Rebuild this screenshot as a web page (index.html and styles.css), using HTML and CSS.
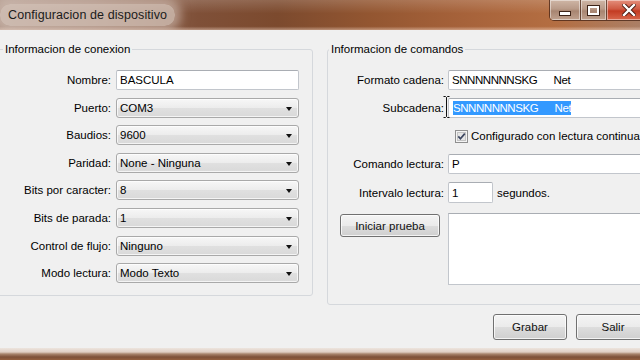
FILE: index.html
```html
<!DOCTYPE html>
<html lang="es">
<head>
<meta charset="utf-8">
<title>Configuracion de dispositivo</title>
<link rel="stylesheet" href="styles.css">
</head>
<body>
<div class="window">
  <div class="titlebar">
    <div class="title-glow"><span class="title">Configuracion de dispositivo</span></div>
    <div class="caption-btns">
      <div class="cbtn cbtn-min"><span class="glyph-min"></span></div>
      <div class="cbtn cbtn-max"><span class="glyph-max"></span></div>
      <div class="cbtn cbtn-close">
        <svg width="14" height="12" viewBox="0 0 14 12"><path d="M2 1 L12 11 M12 1 L2 11" stroke="#4a1a10" stroke-width="4.2" stroke-linecap="square"/><path d="M2 1 L12 11 M12 1 L2 11" stroke="#ffffff" stroke-width="2.4" stroke-linecap="square"/></svg>
      </div>
    </div>
  </div>

  <div class="client">
    <div class="groups">
      <fieldset class="group group-left">
        <legend>Informacion de conexion</legend>
        <div class="form form-left">
          <span class="lbl">Nombre:</span><div class="textbox">BASCULA</div>
          <span class="lbl">Puerto:</span><div class="combo"><span>COM3</span><span class="arrow"></span></div>
          <span class="lbl">Baudios:</span><div class="combo"><span>9600</span><span class="arrow"></span></div>
          <span class="lbl">Paridad:</span><div class="combo"><span>None - Ninguna</span><span class="arrow"></span></div>
          <span class="lbl">Bits por caracter:</span><div class="combo"><span>8</span><span class="arrow"></span></div>
          <span class="lbl">Bits de parada:</span><div class="combo"><span>1</span><span class="arrow"></span></div>
          <span class="lbl">Control de flujo:</span><div class="combo"><span>Ninguno</span><span class="arrow"></span></div>
          <span class="lbl">Modo lectura:</span><div class="combo"><span>Modo Texto</span><span class="arrow"></span></div>
        </div>
      </fieldset>

      <fieldset class="group group-right">
        <legend>Informacion de comandos</legend>
        <div class="form form-right">
          <span class="lbl">Formato cadena:</span><div class="textbox mono-ish">SNNNNNNNSKG      Net</div>
          <span class="lbl">Subcadena:</span><div class="textbox mono-ish"><span class="selected">SNNNNNNNSKG      Net</span></div>
          <span></span>
          <div class="check-row">
            <svg class="checkbox" width="13" height="13" viewBox="0 0 13 13">
              <rect x="0.5" y="0.5" width="12" height="12" fill="#f4f4f4" stroke="#8f8f8f"/>
              <rect x="2.5" y="2.5" width="8" height="8" fill="#e6e6e6" stroke="#c4c4c4"/>
              <path d="M3.3 6.4 L5.4 8.8 L9.8 3.6" fill="none" stroke="#3c4660" stroke-width="1.7"/>
            </svg>
            <span>Configurado con lectura continua</span>
          </div>
          <span class="lbl">Comando lectura:</span><div class="textbox">P</div>
          <span class="lbl">Intervalo lectura:</span>
          <div class="interval"><div class="textbox small">1</div><span>segundos.</span></div>
          <div class="btn-cell"><div class="button btn-test">Iniciar prueba</div></div>
          <div class="textarea"></div>
        </div>
      </fieldset>
    </div>

    <div class="actions">
      <div class="button btn-action">Grabar</div>
      <div class="button btn-action">Salir</div>
    </div>
  </div>
  <div class="frame-bottom"></div>

  <svg class="ibeam" width="7" height="22" viewBox="0 0 7 22">
    <path d="M0.5 0.5 H2.5 L3.5 1.5 L4.5 0.5 H6.5 M3.5 1.5 V20.5 M0.5 21.5 H2.5 L3.5 20.5 L4.5 21.5 H6.5" fill="none" stroke="#111" stroke-width="1"/>
  </svg>
</div>
</body>
</html>
```

FILE: styles.css
```css
html, body {
  margin: 0;
  padding: 0;
}

body {
  width: 640px;
  height: 360px;
  overflow: hidden;
  background: #7a4a30;
  font-family: "Liberation Sans", Arial, sans-serif;
  font-size: 11.5px;
  color: #000;
}

.window {
  position: relative;
  width: 660px;
  height: 360px;
  display: flex;
  flex-direction: column;
}

/* ---------- title bar ---------- */
.titlebar {
  height: 30px;
  flex: none;
  display: flex;
  justify-content: space-between;
  align-items: flex-start;
  background:
    linear-gradient(180deg, rgba(255,255,255,0.16) 0%, rgba(255,255,255,0) 45%, rgba(0,0,0,0) 88%, rgba(255,230,215,0.45) 100%),
    linear-gradient(90deg, #a98e80 0%, #9a7766 14%, #7f5038 30%, #7c4a2e 42%, #935631 56%, #a6623a 70%, #b46e42 84%, #a9836e 100%);
}

.title-glow {
  margin-top: 4px;
  height: 22px;
  padding: 0 8px 0 8px;
  display: flex;
  align-items: center;
  background: rgba(218, 203, 193, 0.72);
  box-shadow: 0 0 10px 6px rgba(218, 203, 193, 0.55);
  border-radius: 10px;
}

.title {
  font-size: 12.5px;
  color: #1b1b1b;
  letter-spacing: 0.1px;
}

.caption-btns {
  display: flex;
  margin-right: 9px;
  height: 20px;
  border: 1px solid rgba(70, 35, 20, 0.75);
  border-top: none;
  border-radius: 0 0 5px 5px;
  overflow: hidden;
}

.cbtn {
  height: 20px;
  display: flex;
  align-items: center;
  justify-content: center;
  box-shadow: inset 0 0 0 1px rgba(255, 255, 255, 0.45);
}

.cbtn-min {
  width: 30px;
  background: linear-gradient(180deg, #cfb6a6 0%, #b89a88 45%, #a88571 55%, #bfa18e 100%);
  border-right: 1px solid rgba(70, 35, 20, 0.7);
}

.cbtn-max {
  width: 25px;
  background: linear-gradient(180deg, #cfb6a6 0%, #b89a88 45%, #a88571 55%, #bfa18e 100%);
  border-right: 1px solid rgba(70, 35, 20, 0.7);
}

.cbtn-close {
  width: 43px;
  background: linear-gradient(180deg, #e48f7c 0%, #cf5a43 45%, #c33b22 55%, #d8674c 100%);
}

.glyph-min {
  width: 10px;
  height: 3px;
  margin-top: 6px;
  background: #fff;
  border: 1px solid #3d2418;
}

.glyph-max {
  width: 7px;
  height: 5px;
  border: 2px solid #fff;
  outline: 1px solid #3d2418;
}

/* ---------- client ---------- */
.client {
  flex: 1;
  background: #f0f0f0;
  padding-top: 12px;
  display: flex;
  flex-direction: column;
}

.groups {
  display: flex;
  gap: 14px;
  margin-left: -3px;
}

.group {
  margin: 0;
  padding: 0;
  border: 1px solid #d5d8dc;
  border-radius: 3px;
  min-width: 0;
}

.group legend {
  padding: 0 2px;
  line-height: 14px;
  font-size: 11.5px;
  color: #000;
}

.group-left {
  width: 316px;
  height: 254px;
  box-sizing: border-box;
}

.group-left legend {
  margin-left: 5px;
}

.group-right {
  width: 321px;
  height: 263px;
  box-sizing: border-box;
}

.group-right legend {
  margin-left: 1px;
}

.form {
  display: grid;
  padding-top: 14px;
  align-items: center;
}

.form-left {
  grid-template-columns: 113px 183px;
  grid-auto-rows: 20px;
  column-gap: 5px;
  row-gap: 7.6px;
}

.form-right {
  grid-template-columns: 116px 200px;
  grid-template-rows: 20px 20px 20px 20px 21px 74px;
  column-gap: 4px;
  row-gap: 8px;
}

.lbl {
  text-align: right;
  white-space: nowrap;
}

.textbox {
  box-sizing: border-box;
  height: 100%;
  background: #fff;
  border: 1px solid #c2c6cc;
  border-top-color: #a9adb3;
  border-radius: 2px;
  padding-left: 3px;
  display: flex;
  align-items: center;
  white-space: pre;
}

.mono-ish {
  letter-spacing: -0.45px;
}

.selected {
  background: #3399ff;
  color: #fff;
  padding: 1px 0;
  margin-left: 1px;
}

.combo {
  box-sizing: border-box;
  height: 100%;
  border: 1px solid #a9a9a9;
  border-radius: 3px;
  background: linear-gradient(180deg, #f7f7f7 0%, #ececec 50%, #e0e0e0 51%, #d9d9d9 100%);
  box-shadow: inset 0 0 0 1px rgba(255, 255, 255, 0.7);
  padding: 0 6px 0 3px;
  display: flex;
  align-items: center;
  justify-content: space-between;
}

.arrow {
  width: 0;
  height: 0;
  margin-top: 2px;
  border-left: 3.5px solid transparent;
  border-right: 3.5px solid transparent;
  border-top: 4px solid #111;
}

.check-row {
  display: flex;
  align-items: center;
  gap: 3px;
  padding-left: 7px;
  white-space: nowrap;
}

.checkbox {
  flex: none;
}

.interval {
  display: flex;
  align-items: center;
  gap: 4px;
  height: 100%;
}

.textbox.small {
  width: 45px;
  flex: none;
}

.btn-cell {
  align-self: start;
  padding-left: 12px;
  padding-top: 3px;
}

.textarea {
  align-self: stretch;
  margin-top: 2px;
  background: #fff;
  border: 1px solid #c2c6cc;
  border-top-color: #a9adb3;
}

.button {
  box-sizing: border-box;
  border: 1px solid #707070;
  border-radius: 3px;
  background: linear-gradient(180deg, #f4f4f4 0%, #ebebeb 50%, #dddddd 51%, #cfcfcf 100%);
  box-shadow: inset 0 0 0 1px rgba(255, 255, 255, 0.75);
  display: flex;
  align-items: center;
  justify-content: center;
  color: #111;
}

.btn-test {
  width: 100px;
  height: 23px;
}

.actions {
  display: flex;
  justify-content: flex-end;
  gap: 9px;
  margin-top: 9px;
  padding-right: 10px;
}

.btn-action {
  width: 74px;
  height: 26px;
}

/* ---------- bottom frame ---------- */
.frame-bottom {
  height: 12px;
  flex: none;
  background:
    linear-gradient(180deg, #ece4de 0px, #e0cfc4 4px, #a8846c 6px, #7d5038 9px, #94603f 12px);
}

/* text cursor drawn over the Subcadena field */
.ibeam {
  position: absolute;
  left: 443px;
  top: 96px;
}
```
